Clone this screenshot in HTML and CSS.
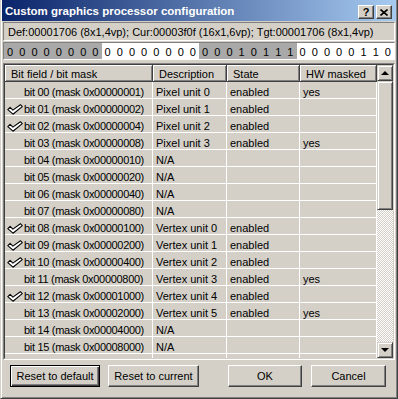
FILE: index.html
```html
<!DOCTYPE html>
<html lang="en">
<head>
    <meta charset="UTF-8">
    <title>Custom graphics processor configuration</title>
    <link rel="stylesheet" href="styles.css">
</head>
<body>
<div class="window">
    <div class="titlebar">
        <span class="title">Custom graphics processor configuration</span>
        <span class="tb-btns">
            <span class="tb-btn">?</span>
            <span class="tb-btn"><svg width="8" height="7" viewBox="0 0 8 7"><path d="M0.5 0.5 L7.5 6.5 M7.5 0.5 L0.5 6.5" stroke="#000" stroke-width="1.6"/></svg></span>
        </span>
    </div>

    <div class="info">Def:00001706 (8x1,4vp); Cur:00003f0f (16x1,6vp); Tgt:00001706 (8x1,4vp)</div>

    <div class="bits">
        <div class="byte dark"><span>0</span><span>0</span><span>0</span><span>0</span><span>0</span><span>0</span><span>0</span><span>0</span></div>
        <div class="byte light"><span>0</span><span>0</span><span>0</span><span>0</span><span>0</span><span>0</span><span>0</span><span>0</span></div>
        <div class="byte dark"><span>0</span><span>0</span><span>0</span><span>1</span><span>0</span><span>1</span><span>1</span><span>1</span></div>
        <div class="byte light"><span>0</span><span>0</span><span>0</span><span>0</span><span>0</span><span>1</span><span>1</span><span>0</span></div>
    </div>

    <div class="list">
        <div class="list-inner">
            <div class="list-main">
                <div class="list-head">
                    <div class="hcell">Bit field / bit mask</div>
                    <div class="hcell">Description</div>
                    <div class="hcell">State</div>
                    <div class="hcell">HW masked</div>
                </div>
                <div class="list-body">
                    <div class="row"><div class="cell bit"><span class="mark"></span>bit 00 (mask 0x00000001)</div><div class="cell">Pixel unit 0</div><div class="cell">enabled</div><div class="cell">yes</div></div>
                    <div class="row"><div class="cell bit"><span class="mark"><svg width="16" height="11" viewBox="0 0 16 11"><path d="M0.8 5.6 L3.1 3.4 L5.9 6.1 L13.4 0.7 L15.3 2.6 L6 10.2 Z" fill="#fff" stroke="#000" stroke-width="1.1" stroke-linejoin="round"/></svg></span>bit 01 (mask 0x00000002)</div><div class="cell">Pixel unit 1</div><div class="cell">enabled</div><div class="cell"></div></div>
                    <div class="row"><div class="cell bit"><span class="mark"><svg width="16" height="11" viewBox="0 0 16 11"><path d="M0.8 5.6 L3.1 3.4 L5.9 6.1 L13.4 0.7 L15.3 2.6 L6 10.2 Z" fill="#fff" stroke="#000" stroke-width="1.1" stroke-linejoin="round"/></svg></span>bit 02 (mask 0x00000004)</div><div class="cell">Pixel unit 2</div><div class="cell">enabled</div><div class="cell"></div></div>
                    <div class="row"><div class="cell bit"><span class="mark"></span>bit 03 (mask 0x00000008)</div><div class="cell">Pixel unit 3</div><div class="cell">enabled</div><div class="cell">yes</div></div>
                    <div class="row"><div class="cell bit"><span class="mark"></span>bit 04 (mask 0x00000010)</div><div class="cell">N/A</div><div class="cell"></div><div class="cell"></div></div>
                    <div class="row"><div class="cell bit"><span class="mark"></span>bit 05 (mask 0x00000020)</div><div class="cell">N/A</div><div class="cell"></div><div class="cell"></div></div>
                    <div class="row"><div class="cell bit"><span class="mark"></span>bit 06 (mask 0x00000040)</div><div class="cell">N/A</div><div class="cell"></div><div class="cell"></div></div>
                    <div class="row"><div class="cell bit"><span class="mark"></span>bit 07 (mask 0x00000080)</div><div class="cell">N/A</div><div class="cell"></div><div class="cell"></div></div>
                    <div class="row"><div class="cell bit"><span class="mark"><svg width="16" height="11" viewBox="0 0 16 11"><path d="M0.8 5.6 L3.1 3.4 L5.9 6.1 L13.4 0.7 L15.3 2.6 L6 10.2 Z" fill="#fff" stroke="#000" stroke-width="1.1" stroke-linejoin="round"/></svg></span>bit 08 (mask 0x00000100)</div><div class="cell">Vertex unit 0</div><div class="cell">enabled</div><div class="cell"></div></div>
                    <div class="row"><div class="cell bit"><span class="mark"><svg width="16" height="11" viewBox="0 0 16 11"><path d="M0.8 5.6 L3.1 3.4 L5.9 6.1 L13.4 0.7 L15.3 2.6 L6 10.2 Z" fill="#fff" stroke="#000" stroke-width="1.1" stroke-linejoin="round"/></svg></span>bit 09 (mask 0x00000200)</div><div class="cell">Vertex unit 1</div><div class="cell">enabled</div><div class="cell"></div></div>
                    <div class="row"><div class="cell bit"><span class="mark"><svg width="16" height="11" viewBox="0 0 16 11"><path d="M0.8 5.6 L3.1 3.4 L5.9 6.1 L13.4 0.7 L15.3 2.6 L6 10.2 Z" fill="#fff" stroke="#000" stroke-width="1.1" stroke-linejoin="round"/></svg></span>bit 10 (mask 0x00000400)</div><div class="cell">Vertex unit 2</div><div class="cell">enabled</div><div class="cell"></div></div>
                    <div class="row"><div class="cell bit"><span class="mark"></span>bit 11 (mask 0x00000800)</div><div class="cell">Vertex unit 3</div><div class="cell">enabled</div><div class="cell">yes</div></div>
                    <div class="row"><div class="cell bit"><span class="mark"><svg width="16" height="11" viewBox="0 0 16 11"><path d="M0.8 5.6 L3.1 3.4 L5.9 6.1 L13.4 0.7 L15.3 2.6 L6 10.2 Z" fill="#fff" stroke="#000" stroke-width="1.1" stroke-linejoin="round"/></svg></span>bit 12 (mask 0x00001000)</div><div class="cell">Vertex unit 4</div><div class="cell">enabled</div><div class="cell"></div></div>
                    <div class="row"><div class="cell bit"><span class="mark"></span>bit 13 (mask 0x00002000)</div><div class="cell">Vertex unit 5</div><div class="cell">enabled</div><div class="cell">yes</div></div>
                    <div class="row"><div class="cell bit"><span class="mark"></span>bit 14 (mask 0x00004000)</div><div class="cell">N/A</div><div class="cell"></div><div class="cell"></div></div>
                    <div class="row"><div class="cell bit"><span class="mark"></span>bit 15 (mask 0x00008000)</div><div class="cell">N/A</div><div class="cell"></div><div class="cell"></div></div>
                    <div class="row"><div class="cell bit"><span class="mark"></span></div><div class="cell"></div><div class="cell"></div><div class="cell"></div></div>
                </div>
            </div>
            <div class="vscroll">
                <div class="sb-btn"><span class="arrow-up"></span></div>
                <div class="sb-thumb"></div>
                <div class="sb-track"></div>
                <div class="sb-btn"><span class="arrow-down"></span></div>
            </div>
        </div>
    </div>

    <div class="actions">
        <div class="btn default"><span>Reset to default</span></div>
        <div class="btn current"><span>Reset to current</span></div>
        <div class="btn ok"><span>OK</span></div>
        <div class="btn cancel"><span>Cancel</span></div>
    </div>
</div>
</body>
</html>
```

FILE: styles.css
```css
* {
    box-sizing: border-box;
}

body {
    margin: 0;
    background-color: #d4d0c8;
    font-family: "Liberation Sans", Arial, sans-serif;
    font-size: 11px;
    color: #000;
}

.window {
    width: 398px;
    height: 399px;
    display: flex;
    flex-direction: column;
    padding: 0 1px 1px 1px;
    border-left: 1px solid #d4d0c8;
    border-right: 1px solid #404040;
    border-bottom: 1px solid #404040;
    box-shadow: inset 1px 0 #fff, inset -1px -1px #808080;
}

/* title bar */

.titlebar {
    height: 21px;
    flex: none;
    display: flex;
    justify-content: space-between;
    padding: 0 4px 0 3px;
    background: linear-gradient(to right, #0a246a, #a6caf0);
    color: #fff;
}

.title {
    font-weight: bold;
    font-size: 11.5px;
    line-height: 12px;
    padding-top: 5px;
    white-space: nowrap;
}

.tb-btns {
    display: flex;
    gap: 2px;
    padding-top: 5px;
}

.tb-btn {
    width: 16px;
    height: 14px;
    display: flex;
    align-items: center;
    justify-content: center;
    background-color: #d4d0c8;
    border: 1px solid;
    border-color: #fff #404040 #404040 #fff;
    box-shadow: inset -1px -1px #808080;
    color: #000;
    font-weight: bold;
    font-size: 11px;
}

/* info + bit strip */

.info {
    height: 19px;
    flex: none;
    margin: 1px 1px 0;
    padding: 3px 0 0 4px;
    line-height: 12px;
    white-space: nowrap;
    overflow: hidden;
    border: 1px solid;
    border-color: #808080 #fff #fff #808080;
}

.bits {
    height: 18px;
    flex: none;
    display: flex;
    margin: 1px 1px 0;
    border: 1px solid;
    border-color: #808080 #fff #fff #808080;
}

.byte {
    flex: 1;
    display: flex;
    padding-top: 3px;
    line-height: 12px;
}

.byte span {
    flex: 1;
    text-align: center;
}

.byte.dark {
    background-color: #a9a9a9;
}

.byte.light {
    background-color: #fff;
}

/* list view */

.list {
    height: 297px;
    flex: none;
    margin: 3px 1px 0;
    border: 1px solid;
    border-color: #808080 #fff #fff #808080;
}

.list-inner {
    height: 100%;
    display: flex;
    border: 1px solid;
    border-color: #404040 #d4d0c8 #d4d0c8 #404040;
}

.list-main {
    flex: 1;
    display: flex;
    flex-direction: column;
    overflow: hidden;
}

.list-head,
.row {
    display: grid;
    grid-template-columns: 148px 74px 73px 77px;
}

.hcell {
    height: 17px;
    padding: 3px 0 0 6px;
    line-height: 12px;
    white-space: nowrap;
    overflow: hidden;
    border-right: 1px solid #404040;
    border-bottom: 1px solid #404040;
    box-shadow: inset 1px 1px #fff, inset -1px -1px #808080;
}

.list-body {
    flex: 1;
    overflow: hidden;
}

.cell {
    height: 17px;
    padding: 4px 0 0 3px;
    line-height: 12px;
    white-space: nowrap;
    overflow: hidden;
    border-right: 1px solid #fff;
    border-bottom: 1px solid #fff;
}

.cell.bit {
    display: flex;
    padding-left: 2px;
    letter-spacing: -0.3px;
}

.mark {
    width: 17px;
    flex: none;
}

.mark svg {
    display: block;
    margin-top: 1px;
}

/* scrollbar */

.vscroll {
    width: 16px;
    flex: none;
    display: flex;
    flex-direction: column;
}

.sb-btn,
.sb-thumb {
    background-color: #d4d0c8;
    border: 1px solid;
    border-color: #d4d0c8 #404040 #404040 #d4d0c8;
    box-shadow: inset 1px 1px #fff, inset -1px -1px #808080;
}

.sb-btn {
    height: 16px;
    display: flex;
    align-items: center;
    justify-content: center;
}

.sb-thumb {
    height: 129px;
}

.sb-track {
    flex: 1;
    background: repeating-conic-gradient(#fff 0 25%, #d4d0c8 0 50%) 0 0 / 2px 2px;
}

.arrow-up {
    border-left: 4px solid transparent;
    border-right: 4px solid transparent;
    border-bottom: 4px solid #000;
}

.arrow-down {
    border-left: 4px solid transparent;
    border-right: 4px solid transparent;
    border-top: 4px solid #000;
}

/* buttons */

.actions {
    display: flex;
    margin-top: 5px;
    padding-left: 8px;
}

.btn {
    height: 22px;
    display: flex;
    align-items: center;
    justify-content: center;
    white-space: nowrap;
    line-height: 14px;
    background-color: #d4d0c8;
    border: 1px solid;
    border-color: #fff #404040 #404040 #fff;
    box-shadow: inset -1px -1px #808080;
}

.btn span {
    display: block;
}

.btn.default {
    width: 90px;
    border-color: #000;
    box-shadow: inset 1px 1px #fff, inset -1px -1px #404040, inset -2px -2px #808080;
}

.btn.current {
    width: 91px;
    margin-left: 8px;
}

.btn.ok {
    width: 74px;
    margin-left: 29px;
}

.btn.cancel {
    width: 75px;
    margin-left: 9px;
}
```
